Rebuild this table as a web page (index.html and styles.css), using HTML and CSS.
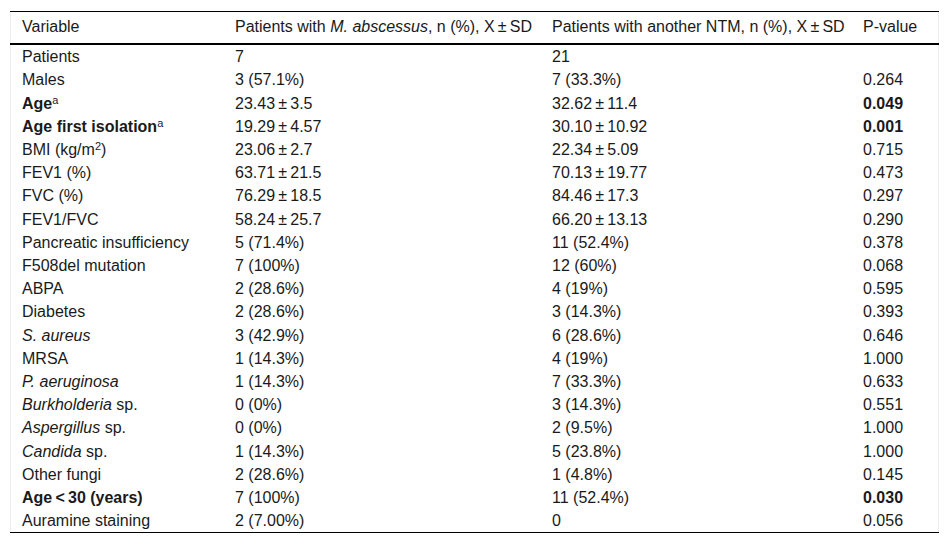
FILE: index.html
```html
<!DOCTYPE html>
<html>
<head>
<meta charset="utf-8">
<link rel="stylesheet" href="styles.css">
</head>
<body>
<div class="wrap">
<table class="tbl">
<colgroup>
<col class="c1"><col class="c2"><col class="c3"><col class="c4">
</colgroup>
<thead>
<tr><th>Variable</th><th>Patients with <i>M. abscessus</i>, n (%), X&thinsp;±&thinsp;SD</th><th>Patients with another NTM, n (%), X&thinsp;±&thinsp;SD</th><th>P-value</th></tr>
</thead>
<tbody>
<tr><td>Patients</td><td>7</td><td>21</td><td></td></tr>
<tr><td>Males</td><td>3 (57.1%)</td><td>7 (33.3%)</td><td>0.264</td></tr>
<tr><td><b>Age</b><sup>a</sup></td><td>23.43&thinsp;±&thinsp;3.5</td><td>32.62&thinsp;±&thinsp;11.4</td><td><b>0.049</b></td></tr>
<tr><td><b>Age first isolation</b><sup>a</sup></td><td>19.29&thinsp;±&thinsp;4.57</td><td>30.10&thinsp;±&thinsp;10.92</td><td><b>0.001</b></td></tr>
<tr><td>BMI (kg/m<sup>2</sup>)</td><td>23.06&thinsp;±&thinsp;2.7</td><td>22.34&thinsp;±&thinsp;5.09</td><td>0.715</td></tr>
<tr><td>FEV1 (%)</td><td>63.71&thinsp;±&thinsp;21.5</td><td>70.13&thinsp;±&thinsp;19.77</td><td>0.473</td></tr>
<tr><td>FVC (%)</td><td>76.29&thinsp;±&thinsp;18.5</td><td>84.46&thinsp;±&thinsp;17.3</td><td>0.297</td></tr>
<tr><td>FEV1/FVC</td><td>58.24&thinsp;±&thinsp;25.7</td><td>66.20&thinsp;±&thinsp;13.13</td><td>0.290</td></tr>
<tr><td>Pancreatic insufficiency</td><td>5 (71.4%)</td><td>11 (52.4%)</td><td>0.378</td></tr>
<tr><td>F508del mutation</td><td>7 (100%)</td><td>12 (60%)</td><td>0.068</td></tr>
<tr><td>ABPA</td><td>2 (28.6%)</td><td>4 (19%)</td><td>0.595</td></tr>
<tr><td>Diabetes</td><td>2 (28.6%)</td><td>3 (14.3%)</td><td>0.393</td></tr>
<tr><td><i>S. aureus</i></td><td>3 (42.9%)</td><td>6 (28.6%)</td><td>0.646</td></tr>
<tr><td>MRSA</td><td>1 (14.3%)</td><td>4 (19%)</td><td>1.000</td></tr>
<tr><td><i>P. aeruginosa</i></td><td>1 (14.3%)</td><td>7 (33.3%)</td><td>0.633</td></tr>
<tr><td><i>Burkholderia</i> sp.</td><td>0 (0%)</td><td>3 (14.3%)</td><td>0.551</td></tr>
<tr><td><i>Aspergillus</i> sp.</td><td>0 (0%)</td><td>2 (9.5%)</td><td>1.000</td></tr>
<tr><td><i>Candida</i> sp.</td><td>1 (14.3%)</td><td>5 (23.8%)</td><td>1.000</td></tr>
<tr><td>Other fungi</td><td>2 (28.6%)</td><td>1 (4.8%)</td><td>0.145</td></tr>
<tr><td><b>Age&thinsp;&lt;&thinsp;30 (years)</b></td><td>7 (100%)</td><td>11 (52.4%)</td><td><b>0.030</b></td></tr>
<tr><td>Auramine staining</td><td>2 (7.00%)</td><td>0</td><td>0.056</td></tr>
</tbody>
</table>
</div>
</body>
</html>
```

FILE: styles.css
```css
html, body {
  margin: 0;
  padding: 0;
  background: #ffffff;
}

body {
  font-family: "Liberation Sans", Arial, sans-serif;
  font-size: 16px;
  color: #1a1a1a;
}

.wrap {
  margin: 11px 0 0 10px;
  width: 929px;
  box-sizing: border-box;
  border-left: 1px solid #ececec;
  border-right: 1px solid #ececec;
}

.tbl {
  width: 100%;
  table-layout: fixed;
  border-collapse: collapse;
  border-top: 1px solid #000;
  border-bottom: 1px solid #000;
  margin-left: -1px;
  width: 929px;
}

.c1 { width: 213px; }
.c2 { width: 317px; }
.c3 { width: 311px; }
.c4 { width: 88px; }

.tbl th {
  font-weight: normal;
  text-align: left;
  line-height: 19.2px;
  padding: 5px 4px 7px 12px;
  border-bottom: 2px solid #000;
  white-space: nowrap;
}

.tbl td {
  line-height: 19.2px;
  padding: 2px 4px 2px 12px;
  white-space: nowrap;
  vertical-align: top;
}

.tbl sup {
  font-size: 11px;
  line-height: 0;
  vertical-align: 5px;
}

.tbl b {
  font-weight: bold;
}
```
